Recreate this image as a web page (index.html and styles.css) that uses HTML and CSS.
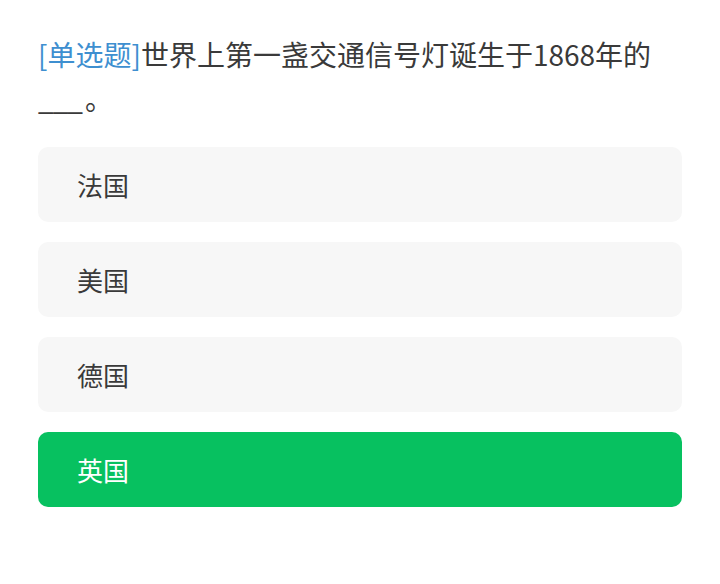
FILE: index.html
```html
<!DOCTYPE html>
<html lang="zh-CN">
<head>
<meta charset="utf-8">
<link rel="stylesheet" href="styles.css">
</head>
<body>
<div class="page">
  <div class="question"><span class="tag">[单选题]</span>世界上第一盏交通信号灯诞生于1868年的<br><span class="blank">___</span>。</div>
  <div class="options">
    <div class="option">法国</div>
    <div class="option">美国</div>
    <div class="option">德国</div>
    <div class="option selected">英国</div>
  </div>
</div>
</body>
</html>
```
FILE: styles.css
```css
html, body {
  margin: 0;
  padding: 0;
  background: #ffffff;
}
.page {
  padding: 32px 38px 0 38px;
  font-family: "Noto Sans CJK SC", "Noto Sans", sans-serif;
}
.question {
  font-size: 28px;
  line-height: 44px;
  color: #3a3a3a;
}
.tag {
  color: #3e8fd0;
}
.blank {
  display: inline-block;
  width: 47px;
  letter-spacing: -1px;
}
.options {
  margin-top: 27px;
  display: flex;
  flex-direction: column;
  gap: 20px;
}
.option {
  height: 75px;
  box-sizing: border-box;
  border-radius: 10px;
  background: #f7f7f7;
  color: #3a3a3a;
  font-size: 26px;
  display: flex;
  align-items: center;
  padding-left: 39px;
}
.option.selected {
  background: #07c160;
  color: #ffffff;
}
```
